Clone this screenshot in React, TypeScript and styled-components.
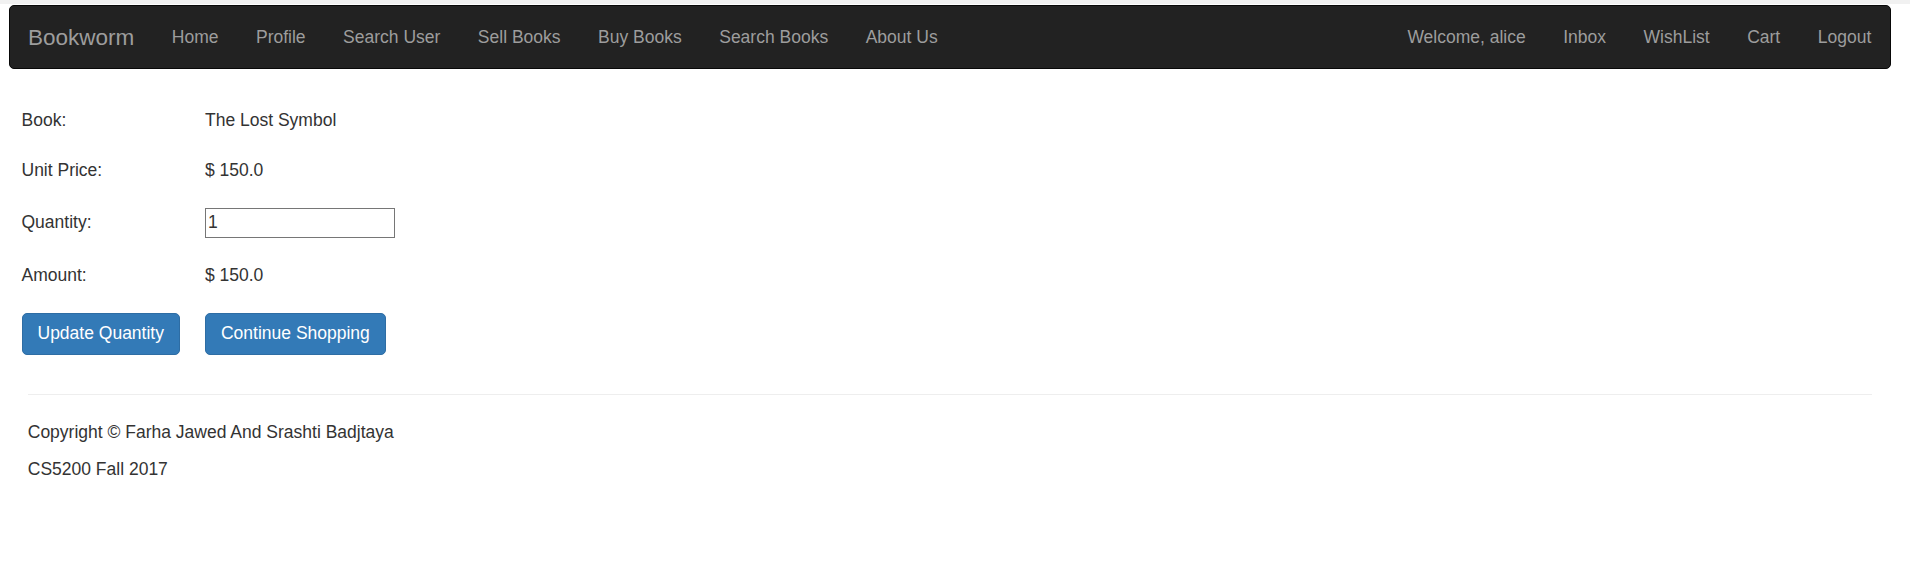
import React from "react";
import styled, { createGlobalStyle } from "styled-components";

const GlobalStyle = createGlobalStyle`
  html, body {
    margin: 0;
    padding: 0;
    background: #fff;
  }
  body {
    font-family: "Liberation Sans", Arial, Helvetica, sans-serif;
    font-size: 17.5px;
    line-height: 25px;
    color: #333;
  }
  * { box-sizing: border-box; }
`;

const TopStrip = styled.div`
  height: 4px;
  background: #f1f1f1;
`;

const Navbar = styled.nav`
  margin: 1px 19px 25px 9px;
  height: 64px;
  background: #222;
  border: 1px solid #080808;
  border-radius: 5px;
  display: flex;
  align-items: stretch;
  justify-content: space-between;
`;

const NavGroup = styled.div`
  display: flex;
  align-items: stretch;
`;

const Brand = styled.a`
  display: flex;
  align-items: center;
  padding: 0 18.75px 0 18px;
  font-size: 22.5px;
  line-height: 25px;
  color: #9d9d9d;
  text-decoration: none;
  cursor: pointer;
`;

const NavLink = styled.a`
  display: flex;
  align-items: center;
  padding: 0 18.75px;
  font-size: 17.5px;
  line-height: 25px;
  color: #9d9d9d;
  text-decoration: none;
  white-space: nowrap;
  cursor: pointer;
  &:hover { color: #fff; }
`;

const FormTable = styled.div`
  display: grid;
  grid-template-columns: auto auto;
  justify-content: start;
  align-items: center;
  margin-left: 7.75px;
  padding: 2.5px;
  gap: 2.5px;
`;

const Cell = styled.div`
  padding: 11.25px;
  display: flex;
  align-items: center;
  white-space: nowrap;
`;

const QtyInput = styled.input`
  width: 190px;
  height: 30px;
  border: 1px solid #767676;
  border-radius: 0;
  padding: 1px 2px;
  font-family: "Liberation Sans", Arial, sans-serif;
  font-size: 17.5px;
  color: #333;
  background: #fff;
  outline: none;
`;

const Button = styled.button`
  display: inline-block;
  padding: 7.5px 15px;
  font-family: "Liberation Sans", Arial, sans-serif;
  font-size: 17.5px;
  line-height: 25px;
  color: #fff;
  background: #337ab7;
  border: 1px solid #2e6da4;
  border-radius: 5px;
  cursor: pointer;
  white-space: nowrap;
`;

const Footer = styled.footer`
  margin: 0 19px 0 9px;
  padding: 0 18.75px;
`;

const Rule = styled.hr`
  margin: 25px 0;
  border: 0;
  border-top: 1px solid #eee;
  height: 0;
`;

const FooterText = styled.p`
  margin: 0 0 12.5px;
`;

const leftLinks = ["Home", "Profile", "Search User", "Sell Books", "Buy Books", "Search Books", "About Us"];
const rightLinks = ["Welcome, alice", "Inbox", "WishList", "Cart", "Logout"];

export default function App() {
  return (
    <>
      <GlobalStyle />
      <TopStrip />
      <Navbar>
        <NavGroup>
          <Brand>Bookworm</Brand>
          {leftLinks.map((l) => (
            <NavLink key={l}>{l}</NavLink>
          ))}
        </NavGroup>
        <NavGroup>
          {rightLinks.map((l) => (
            <NavLink key={l}>{l}</NavLink>
          ))}
        </NavGroup>
      </Navbar>
      <FormTable>
        <Cell>Book:</Cell>
        <Cell>The Lost Symbol</Cell>
        <Cell>Unit Price:</Cell>
        <Cell>$ 150.0</Cell>
        <Cell>Quantity:</Cell>
        <Cell>
          <QtyInput type="text" defaultValue="1" />
        </Cell>
        <Cell>Amount:</Cell>
        <Cell>$ 150.0</Cell>
        <Cell>
          <Button>Update Quantity</Button>
        </Cell>
        <Cell>
          <Button>Continue Shopping</Button>
        </Cell>
      </FormTable>
      <Footer>
        <Rule />
        <FooterText>Copyright © Farha Jawed And Srashti Badjtaya</FooterText>
        <FooterText>CS5200 Fall 2017</FooterText>
      </Footer>
    </>
  );
}
